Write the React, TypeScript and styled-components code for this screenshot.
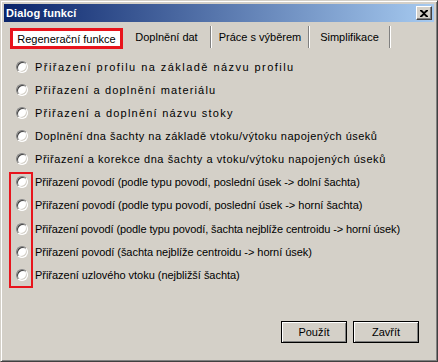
import React from "react";
import styled, { createGlobalStyle } from "styled-components";

const Global = createGlobalStyle`
  html, body { margin: 0; padding: 0; background: #d4d0c8; }
  body { font-family: "Liberation Sans", Arial, sans-serif; }
`;

const Window = styled.div`
  width: 438px;
  height: 362px;
  box-sizing: border-box;
  background: #d4d0c8;
  border-style: solid;
  border-width: 1px;
  border-color: #d4d0c8 #404040 #404040 #d4d0c8;
  box-shadow: inset 1px 1px #ffffff, inset -1px -1px #808080;
  padding: 3px;
  display: flex;
  flex-direction: column;
  font-family: "Liberation Sans", Arial, sans-serif;
  font-size: 11px;
  color: #000;
`;

const TitleBar = styled.div`
  height: 18px;
  background: linear-gradient(to right, #0a246a, #a6caf0);
  display: flex;
  align-items: center;
  justify-content: space-between;
  padding: 0 2px;
`;

const Title = styled.span`
  color: #fff;
  font-weight: bold;
  font-size: 11px;
  letter-spacing: 0.1px;
`;

const CloseBtn = styled.div`
  width: 16px;
  height: 14px;
  box-sizing: border-box;
  background: #d4d0c8;
  border-style: solid;
  border-width: 1px;
  border-color: #fff #404040 #404040 #fff;
  box-shadow: inset -1px -1px #808080;
  display: flex;
  align-items: center;
  justify-content: center;
`;

const Body = styled.div`
  flex: 1;
  display: flex;
  flex-direction: column;
  padding: 4px 4px 0 4px;
`;

const TabStrip = styled.div`
  display: flex;
  align-items: flex-end;
  height: 22px;
  padding-left: 2px;
`;

const Tab = styled.div<{ $active?: boolean; $w: number }>`
  width: ${(p) => p.$w}px;
  box-sizing: border-box;
  height: ${(p) => (p.$active ? 21 : 22)}px;
  display: flex;
  align-items: center;
  justify-content: center;
  white-space: nowrap;
  ${(p) =>
    p.$active
      ? `
    background: #fff;
    border: 3px solid #e8141c;
    margin-bottom: -1px;
  `
      : `
    border-right: 1px solid #808080;
    box-shadow: 1px 0 #ffffff;
    margin-right: 1px;
  `}
`;

const Panel = styled.div`
  flex: 1;
  position: relative;
  padding: 7px 0 0 8px;
`;

const RadioList = styled.div`
  display: flex;
  flex-direction: column;
`;

const Row = styled.label<{ $track: number }>`
  height: 23.15px;
  display: flex;
  align-items: center;
  gap: 7px;
  white-space: nowrap;
  letter-spacing: ${(p) => p.$track}px;
`;

const Radio = styled.span`
  width: 12px;
  height: 12px;
  box-sizing: border-box;
  border-radius: 50%;
  background: #fff;
  border-style: solid;
  border-width: 1px;
  border-color: #808080 #ffffff #ffffff #808080;
  box-shadow: inset 1px 1px #404040, inset -1px -1px #d4d0c8;
  flex: none;
`;

const Highlight = styled.div`
  position: absolute;
  left: 1px;
  top: 124px;
  width: 24px;
  height: 116px;
  box-sizing: border-box;
  border: 2px solid #e8141c;
  pointer-events: none;
`;

const Footer = styled.div`
  display: flex;
  justify-content: flex-end;
  gap: 6px;
  padding: 0 11px 15px 0;
`;

const Button = styled.button`
  width: 66px;
  height: 22px;
  box-sizing: border-box;
  background: #d4d0c8;
  border: 1px solid #000;
  box-shadow: inset 1px 1px #fff, inset -1px -1px #808080;
  font-family: "Liberation Sans", Arial, sans-serif;
  font-size: 11px;
  color: #000;
  padding: 0;
`;

const items: { text: string; track: number }[] = [
  { text: "Přiřazení profilu na základě názvu profilu", track: 1.45 },
  { text: "Přiřazení a doplnění materiálu", track: 1.15 },
  { text: "Přiřazení a doplnění názvu stoky", track: 1.22 },
  { text: "Doplnění dna šachty na základě vtoku/výtoku napojených úseků", track: 0.5 },
  { text: "Přiřazení a korekce dna šachty a vtoku/výtoku napojených úseků", track: 0.56 },
  { text: "Přiřazení povodí (podle typu povodí, poslední úsek -> dolní šachta)", track: -0.03 },
  { text: "Přiřazení povodí (podle typu povodí, poslední úsek -> horní šachta)", track: -0.01 },
  { text: "Přiřazení povodí (podle typu povodí, šachta nejblíže centroidu -> horní úsek)", track: -0.1 },
  { text: "Přiřazení povodí (šachta nejblíže centroidu -> horní úsek)", track: -0.05 },
  { text: "Přiřazení uzlového vtoku (nejbližší šachta)", track: -0.03 },
];

const tabs = [
  { label: "Regenerační funkce", w: 113, active: true },
  { label: "Doplnění dat", w: 88 },
  { label: "Práce s výběrem", w: 97 },
  { label: "Simplifikace", w: 80 },
];

export default function App() {
  return (
    <>
      <Global />
      <Window>
        <TitleBar>
          <Title>Dialog funkcí</Title>
          <CloseBtn>
            <svg width="8" height="7" viewBox="0 0 8 7">
              <path d="M0 0h2l2 2 2-2h2v1L5 3.5 8 6v1H6L4 5 2 7H0V6l3-2.5L0 1z" fill="#000" />
            </svg>
          </CloseBtn>
        </TitleBar>
        <Body>
          <TabStrip>
            {tabs.map((t) => (
              <Tab key={t.label} $active={t.active} $w={t.w}>
                {t.label}
              </Tab>
            ))}
          </TabStrip>
          <Panel>
            <RadioList>
              {items.map((it) => (
                <Row key={it.text} $track={it.track}>
                  <Radio />
                  <span>{it.text}</span>
                </Row>
              ))}
            </RadioList>
            <Highlight />
          </Panel>
          <Footer>
            <Button>Použít</Button>
            <Button>Zavřít</Button>
          </Footer>
        </Body>
      </Window>
    </>
  );
}
